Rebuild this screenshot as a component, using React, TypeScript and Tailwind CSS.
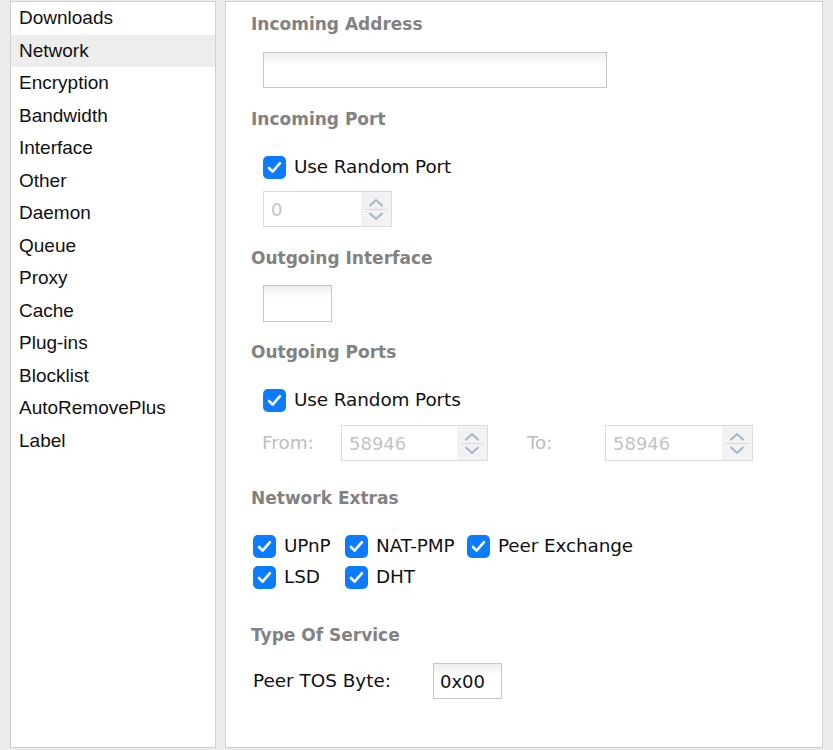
import React from "react";

const sans = "font-['Liberation_Sans',Arial,sans-serif]";
const ui = "font-['DejaVu_Sans',Verdana,sans-serif]";

const menu = [
  "Downloads",
  "Network",
  "Encryption",
  "Bandwidth",
  "Interface",
  "Other",
  "Daemon",
  "Queue",
  "Proxy",
  "Cache",
  "Plug-ins",
  "Blocklist",
  "AutoRemovePlus",
  "Label",
];

const Heading = ({ children, className = "" }: { children: React.ReactNode; className?: string }) => (
  <div className={`h-5 leading-5 text-[17px] font-bold text-[#828282] ${ui} ${className}`}>{children}</div>
);

const Check = () => (
  <span className="flex h-[23px] w-[23px] shrink-0 items-center justify-center rounded-[5px] bg-[#0b7bff]">
    <svg width="15" height="13" viewBox="0 0 15 13" fill="none">
      <path d="M2 7l3.6 3.6L13 2.2" stroke="white" strokeWidth="2.6" strokeLinecap="round" strokeLinejoin="round" />
    </svg>
  </span>
);

const CheckItem = ({ label }: { label: string }) => (
  <div className="flex h-6 items-center gap-[8px]">
    <Check />
    <span className={`text-[18.4px] tracking-[-0.1px] text-[#111] ${ui}`}>{label}</span>
  </div>
);

const Spinner = ({ value, width }: { value: string; width: string }) => (
  <div className={`flex h-9 border border-[#dcdcdc] bg-white ${width}`}>
    <div className={`flex flex-1 items-center pl-[7px] text-[18px] text-[#c4c4c4] ${ui}`}>{value}</div>
    <div className="flex w-[30px] flex-col items-center justify-center bg-[#f2f2f2]">
      <svg width="16" height="9" viewBox="0 0 16 9" fill="none">
        <path d="M2 7.5L8 2l6 5.5" stroke="#a7b5c9" strokeWidth="2" strokeLinecap="round" />
      </svg>
      <div className="my-[2px] h-px w-[22px] bg-[#d6d6d6]" />
      <svg width="16" height="9" viewBox="0 0 16 9" fill="none">
        <path d="M2 1.5L8 7l6-5.5" stroke="#a7b5c9" strokeWidth="2" strokeLinecap="round" />
      </svg>
    </div>
  </div>
);

const TextBox = ({ className = "", children }: { className?: string; children?: React.ReactNode }) => (
  <div
    className={`flex items-center border border-[#c6c6c6] bg-linear-to-b from-[#eeeeee] to-white to-[35%] pl-[6px] text-[18px] text-[#111] ${ui} ${className}`}
  >
    {children}
  </div>
);

export default function App() {
  return (
    <div className="flex h-[750px] w-[833px] gap-[9px] bg-[#ebebeb] pl-[10px] pr-[10px] pt-px pb-[2px]">
      <div className="w-[206px] border border-[#d0d0d0] bg-white">
        {menu.map((m) => (
          <div
            key={m}
            className={`flex h-[32.5px] items-center pl-2 text-[19px] text-[#111] ${sans} ${m === "Network" ? "bg-[#ededed]" : ""}`}
          >
            {m}
          </div>
        ))}
      </div>

      <div className="flex-1 border border-[#d0d0d0] bg-white pl-[25px] pt-[12px]">
        <Heading>Incoming Address</Heading>
        <div className="ml-[12px] mt-[18px]">
          <TextBox className="h-9 w-[344px]" />
        </div>

        <Heading className="mt-[21px]">Incoming Port</Heading>
        <div className="ml-[12px] mt-[26px]">
          <CheckItem label="Use Random Port" />
          <div className="mt-[12px]">
            <Spinner value="0" width="w-[129px]" />
          </div>
        </div>

        <Heading className="mt-[21px]">Outgoing Interface</Heading>
        <div className="ml-[12px] mt-[17px]">
          <TextBox className="h-[37px] w-[69px]" />
        </div>

        <Heading className="mt-[20px]">Outgoing Ports</Heading>
        <div className="ml-[12px] mt-[26px]">
          <CheckItem label="Use Random Ports" />
          <div className={`mt-[13px] flex items-center text-[18.4px] text-[#bdbdbd] ${ui}`}>
            <span className="-ml-px w-[79px]">From:</span>
            <Spinner value="58946" width="w-[147px]" />
            <span className="ml-[39px] w-[78px]">To:</span>
            <Spinner value="58946" width="w-[148px]" />
          </div>
        </div>

        <Heading className="mt-[27px]">Network Extras</Heading>
        <div className="ml-[2px] mt-[26px] grid grid-cols-[92px_122px_auto] gap-y-[7px]">
          <CheckItem label="UPnP" />
          <CheckItem label="NAT-PMP" />
          <CheckItem label="Peer Exchange" />
          <CheckItem label="LSD" />
          <CheckItem label="DHT" />
        </div>

        <Heading className="mt-[36px]">Type Of Service</Heading>
        <div className={`ml-[2px] mt-[18px] flex items-center text-[18.4px] text-[#111] ${ui}`}>
          <span className="w-[180px]">Peer TOS Byte:</span>
          <TextBox className="h-9 w-[69px]">0x00</TextBox>
        </div>
      </div>
    </div>
  );
}
